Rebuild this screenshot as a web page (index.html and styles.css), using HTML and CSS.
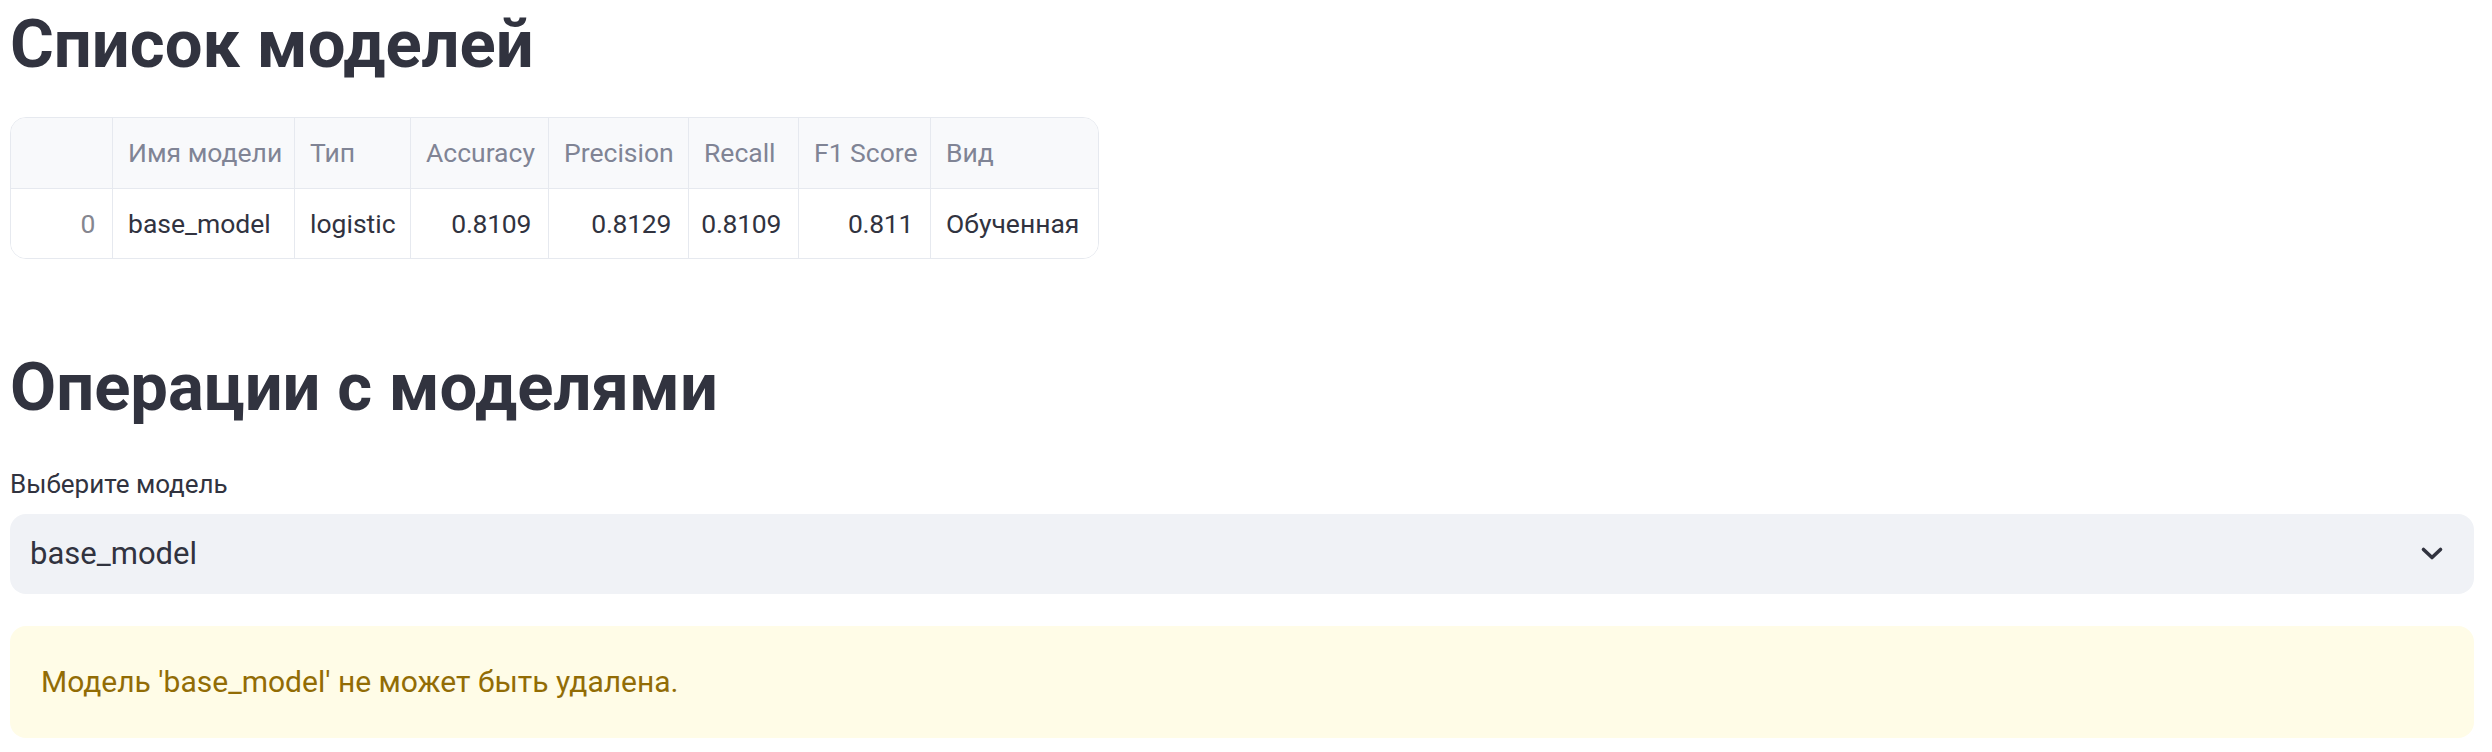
FILE: index.html
```html
<!DOCTYPE html>
<html lang="ru">
<head>
<meta charset="utf-8">
<title>Модели</title>
<link rel="stylesheet" href="styles.css">
</head>
<body>
<main class="page">
  <h2 class="title">Список моделей</h2>
  <div class="table" role="table">
    <div class="row head" role="row">
      <div class="cell" role="columnheader"></div>
      <div class="cell" role="columnheader">Имя модели</div>
      <div class="cell" role="columnheader">Тип</div>
      <div class="cell" role="columnheader">Accuracy</div>
      <div class="cell" role="columnheader">Precision</div>
      <div class="cell" role="columnheader">Recall</div>
      <div class="cell" role="columnheader">F1 Score</div>
      <div class="cell" role="columnheader">Вид</div>
    </div>
    <div class="row body" role="row">
      <div class="cell num idx" role="cell">0</div>
      <div class="cell" role="cell">base_model</div>
      <div class="cell" role="cell">logistic</div>
      <div class="cell num" role="cell">0.8109</div>
      <div class="cell num" role="cell">0.8129</div>
      <div class="cell num" role="cell">0.8109</div>
      <div class="cell num" role="cell">0.811</div>
      <div class="cell" role="cell">Обученная</div>
    </div>
  </div>

  <h2 class="title title-second">Операции с моделями</h2>
  <label class="label">Выберите модель</label>
  <div class="select">
    <span class="select-value">base_model</span>
    <svg class="chevron" width="40" height="40" viewBox="0 0 40 40" aria-hidden="true">
      <polyline points="11.5,15.5 20,23.5 28.5,15.5" fill="none" stroke="#31333f" stroke-width="3.6" stroke-linecap="round" stroke-linejoin="round"/>
    </svg>
  </div>
  <div class="alert">Модель 'base_model' не может быть удалена.</div>
</main>
</body>
</html>
```
FILE: styles.css
```css
* {
  box-sizing: border-box;
}

body {
  margin: 0;
  background: #ffffff;
  font-family: Roboto, "Noto Sans", sans-serif;
  color: #31333f;
}

.page {
  display: flex;
  flex-direction: column;
  align-items: flex-start;
  padding: 4px 18px 0 10px;
}

.title {
  margin: 0;
  font-size: 67px;
  line-height: 80px;
  font-weight: 700;
  color: #31333f;
}

.title-second {
  margin-top: 88px;
}

.table {
  margin-top: 33px;
  border: 1px solid #e6e9ef;
  border-radius: 16px;
  overflow: hidden;
  font-size: 26.5px;
}

.row {
  display: grid;
  grid-template-columns: 102px 182px 116px 138px 140px 110px 132px 167px;
}

.head {
  height: 71px;
  background: #f8f9fb;
  color: #808495;
  border-bottom: 1px solid #e6e9ef;
}

.body {
  height: 69px;
  background: #ffffff;
}

.cell {
  display: flex;
  align-items: center;
  padding: 0 15px;
  border-right: 1px solid #e6e9ef;
  white-space: nowrap;
  line-height: 44px;
}

.cell:last-child {
  border-right: none;
}

.num {
  justify-content: flex-end;
  padding-right: 17px;
  letter-spacing: -0.3px;
}

.idx {
  color: #85868f;
}

.label {
  margin-top: 39px;
  font-size: 26px;
  line-height: 36px;
  color: #31333f;
}

.select {
  align-self: stretch;
  margin-top: 12px;
  height: 80px;
  background: #f0f2f6;
  border-radius: 16px;
  display: flex;
  align-items: center;
  justify-content: space-between;
  padding: 0 22px 0 20px;
  font-size: 31px;
  line-height: 40px;
}

.chevron {
  display: block;
}

.alert {
  align-self: stretch;
  margin-top: 32px;
  padding: 32px 31px;
  background: #fffce7;
  color: #926c05;
  border-radius: 16px;
  font-size: 30px;
  line-height: 48px;
}
```
